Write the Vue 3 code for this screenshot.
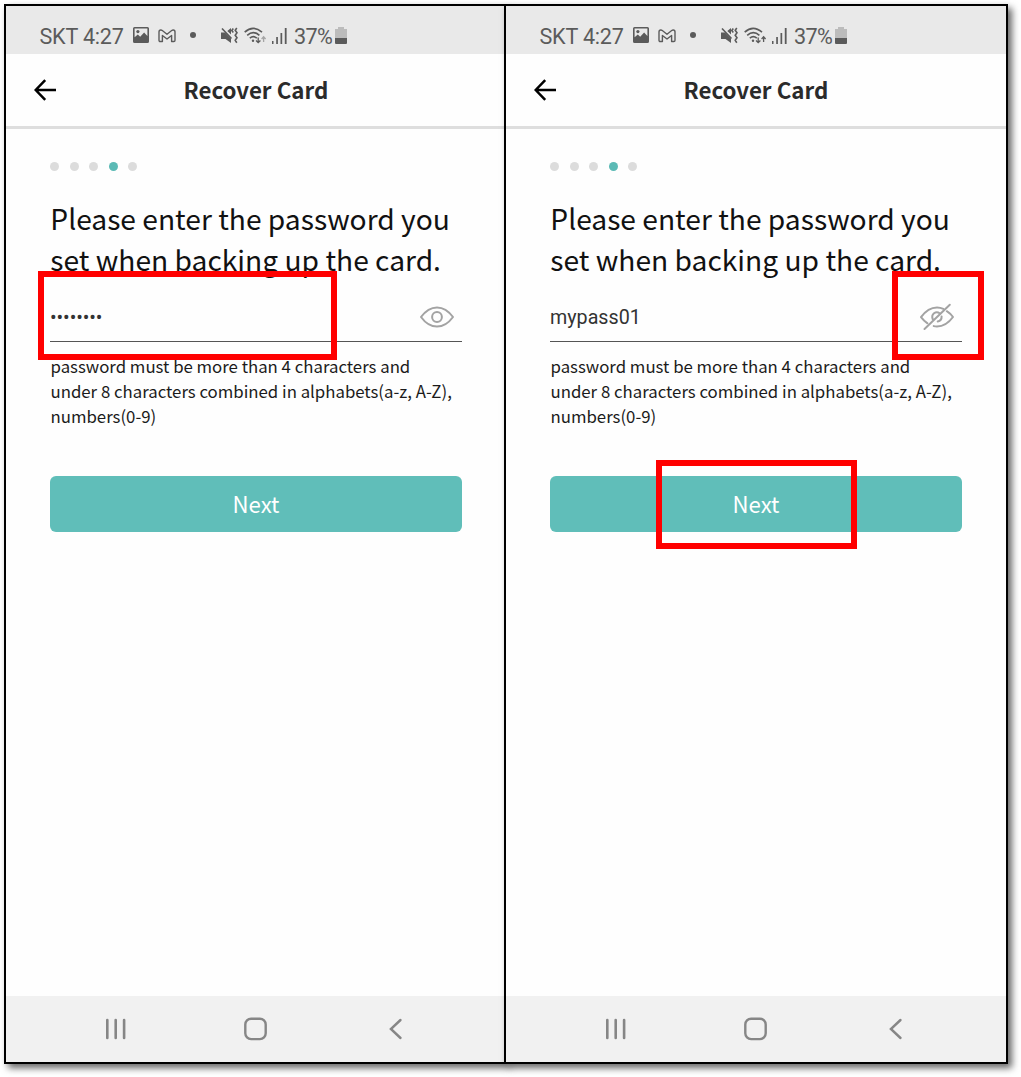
<script setup>
const screens = [
  { id: 'hidden', revealed: false, value: '••••••••' },
  { id: 'shown', revealed: true, value: 'mypass01' },
]
</script>

<template>
  <main class="board">
    <section v-for="s in screens" :key="s.id" class="phone" :class="s.id">
      <div class="status">
        <span class="carrier">SKT 4:27</span>
        <svg class="picture" width="17" height="17" viewBox="0 0 17 17">
          <path fill="#5b5b5b" fill-rule="evenodd" d="M1.500 0h13q1.500 0 1.500 1.500v13q0 1.500-1.500 1.500h-13Q0 16 0 14.500v-13Q0 0 1.500 0ZM1.600 1.600v8.600l3.200-2.700 2.400 2.200 3.900-4.300 3.300 3.600V1.600Z" />
          <circle cx="4.900" cy="4.600" r="1.600" fill="#5b5b5b" />
        </svg>
        <svg class="mail" width="18" height="14" viewBox="0 0 18 14">
          <path fill="none" stroke="#5b5b5b" stroke-width="1.400" stroke-linejoin="round" d="M1 3.100Q1 1 2.800 1q.8 0 1.500.5L9 5.200l4.700-3.700Q14.400 1 15.200 1 17 1 17 3.100v8.200q0 1.200-1.200 1.200h-2.200V6.500L9 10 4.400 6.500v6H2.200Q1 12.500 1 11.300Z" />
        </svg>
        <i class="more"></i>
        <svg class="mute" width="19" height="18" viewBox="0 0 19 18">
          <path fill="#5b5b5b" d="M0 5.500h4l6 6V16l-5.500-4H0ZM6.300 4 10 1v6.500Z" />
          <path fill="none" stroke="#5b5b5b" stroke-width="1.600" d="m1 1.500 9.500 10M12.300 1.500l-1.500 2 1.500 2M15.800 1l-1.600 2.300 1.800 2.500-1.800 2.500 1.800 2.500-1.800 2.500 1.600 2.500" />
        </svg>
        <svg class="wifi" width="23" height="18" viewBox="0 0 23 18">
          <g fill="none" stroke="#5b5b5b" stroke-width="1.600">
            <path d="M.7 5.200q8.300-7.800 17.300 0M3.200 8.300q6.100-5.400 12.200 0M5.800 11.200q3.500-3 7 0" />
            <path stroke-width="1.300" d="M14.200 10.500v5m-2.200-2 2.200 2.200 2.200-2.200" />
            <path :stroke="s.revealed ? '#5b5b5b' : '#a5a5a5'" stroke-width="1.300" d="M19.600 15v-5m-2 2 2-2.200 2 2.200" />
          </g>
          <circle cx="9" cy="13.800" r="1.200" fill="#5b5b5b" />
        </svg>
        <svg class="signal" width="15" height="16" viewBox="0 0 15 16">
          <path fill="#5b5b5b" d="M0 13h1.500v3H0ZM4.200 9h1.700v7H4.200ZM8.500 5h1.700v11H8.500ZM12.800 0h1.800v16h-1.800Z" />
        </svg>
        <span class="percent">37%</span>
        <svg class="battery" width="12" height="17" viewBox="0 0 12 17">
          <path fill="#bcbcbc" d="M3 0h6v2h3v9H0V2h3Z" />
          <path fill="#5b5b5b" d="M0 11h12v5q0 1-1 1H1q-1 0-1-1Z" />
        </svg>
      </div>

      <header class="bar">
        <svg class="back" width="23" height="22" viewBox="0 0 23 22">
          <path fill="none" stroke="#000" stroke-width="2.500" d="M11.200 1.200 1.700 11l9.500 9.800M1.800 11h20.200" />
        </svg>
        <h1>Recover Card</h1>
      </header>

      <div class="content">
        <div class="steps"><i v-for="n in 5" :key="n" :class="{ on: n === 4 }"></i></div>
        <h2><span>Please enter the password you</span><br /><span>set when backing up the card.</span></h2>
        <div class="field">
          <span class="value">{{ s.value }}</span>
          <svg class="eye" width="36" height="30" viewBox="0 0 36 30">
            <g fill="none" stroke="#a3a3a3" stroke-width="2" stroke-linecap="round" stroke-linejoin="round">
              <template v-if="!s.revealed">
                <path d="M2 15Q9 5.400 18 5.400T34 15Q27 24.600 18 24.600T2 15Z" />
                <circle cx="18" cy="15" r="4.900" />
              </template>
              <template v-else>
                <path d="M8.500 21.300Q4.500 18.600 2 15.200 9 5.500 18 5.500q3.500 0 6.300 1.400M27.800 9.200Q31.500 11.600 34 15q-7 9.500-16 9.500-1.800 0-3.300-.4" />
                <path d="M13.700 17.200Q12.300 13.500 15 11.300q2.800-2 5.600 0M22.600 14.500q.2 4-3.900 5M5.500 27 30.800 2.800" />
              </template>
            </g>
          </svg>
        </div>
        <p><span>password must be more than 4 characters and</span><br /><span>under 8 characters combined in alphabets(a-z, A-Z),</span><br /><span>numbers(0-9)</span></p>
        <button type="button">Next</button>
      </div>

      <nav>
        <svg width="22" height="22" viewBox="0 0 22 22"><path fill="none" stroke="#868686" stroke-width="2.600" stroke-linecap="round" d="M2.300 2v18M10.700 2v18M19.100 2v18" /></svg>
        <svg width="24" height="24" viewBox="0 0 24 24"><rect x="1.300" y="1.700" width="20.400" height="20.400" rx="5.800" fill="none" stroke="#868686" stroke-width="2.400" /></svg>
        <svg width="14" height="22" viewBox="0 0 14 22"><path fill="none" stroke="#868686" stroke-width="2.400" stroke-linecap="round" d="M11.500 2 1.900 11l9.600 9" /></svg>
      </nav>
    </section>
    <i class="mark field-mark"></i>
    <i class="mark eye-mark"></i>
    <i class="mark next-mark"></i>
  </main>
</template>

<style>
body { margin: 0; background: #fff; }
</style>

<style scoped>
* { box-sizing: border-box; }
.board {
  position: relative;
  display: flex;
  width: 1021px;
  height: 1077px;
  padding: 4px 0 0 4px;
  overflow: hidden;
  background: #fff;
  font-family: "Noto Sans CJK KR", "Noto Sans CJK SC", sans-serif;
}
.phone {
  display: flex;
  flex-direction: column;
  width: 502px;
  height: 1060px;
  border: 2px solid #000;
  background: #fefefe;
  box-shadow: 4px 4px 7px rgba(0, 0, 0, 0.6);
}
.shown { width: 504px; margin-left: -2px; }
.status {
  display: flex;
  align-items: flex-start;
  height: 48px;
  padding-left: 33.500px;
  background: #e9e9e9;
  color: #5b5b5b;
  font: 21.600px/26px Roboto, sans-serif;
}
.status svg { flex: none; }
.carrier { width: 93.500px; margin-top: 18px; white-space: nowrap; letter-spacing: -0.2px; }
.picture { margin-top: 21px; }
.mail { margin: 22.500px 0 0 8px; }
.more { width: 6px; height: 6px; margin: 26px 0 0 14px; border-radius: 50%; background: #5b5b5b; }
.mute { margin: 21px 0 0 25px; }
.wifi { margin: 21px 0 0 4px; }
.signal { margin: 22px 0 0 5px; }
.percent { width: 41px; margin: 18px 0 0 7px; letter-spacing: -0.600px; }
.battery { margin-top: 21px; }
.bar {
  display: flex;
  align-items: center;
  height: 75px;
  padding-left: 28px;
  border-bottom: 3px solid #dedede;
}
h1 { margin: -3px 0 0 126.500px; color: #2b2b2b; font-size: 22.300px; font-weight: 700; line-height: 36px; white-space: nowrap; }
.content { flex: 1; width: 456px; padding: 33px 0 0 44px; }
.steps { display: flex; gap: 10.500px; height: 9px; }
.steps i { width: 9px; height: 9px; border-radius: 50%; background: #dcdcdc; }
.steps .on { background: #5bbab5; }
h2 { margin: 26px 0 0; color: #111; font-size: 28.200px; font-weight: 400; line-height: 41px; white-space: nowrap; }
h2 span { margin-left: 0.300px; }
.field {
  display: flex;
  align-items: center;
  justify-content: space-between;
  height: 52px;
  margin-top: 11px;
  padding: 2px 7px 0 0;
  border-bottom: 1px solid #555;
  color: #333;
  font: 19.700px/26px Roboto, sans-serif;
}
.hidden .value { letter-spacing: -0.100px; }
.value { padding-top: 2px; }
p { margin: 12px 0 0; color: #1b1b1b; font-size: 16.800px; line-height: 25px; white-space: nowrap; }
p span { margin-left: 0.500px; }
button {
  display: block;
  width: 412px;
  height: 56px;
  margin-top: 47px;
  padding: 0 0 1px;
  border: 0;
  border-radius: 6px;
  background: #60beb9;
  color: #fff;
  font: 22.200px/55px "Noto Sans CJK KR", sans-serif;
}
nav { display: flex; align-items: center; height: 66px; padding-left: 99px; background: #f1f1f1; }
nav svg:nth-child(2) { margin-left: 117px; }
nav svg:nth-child(3) { margin-left: 121px; }
.mark { position: absolute; border: 6px solid #f00; }
.field-mark { left: 38px; top: 271px; width: 299px; height: 89px; }
.eye-mark { left: 892px; top: 271px; width: 92px; height: 89px; }
.next-mark { left: 656px; top: 460px; width: 201px; height: 89px; }
</style>
